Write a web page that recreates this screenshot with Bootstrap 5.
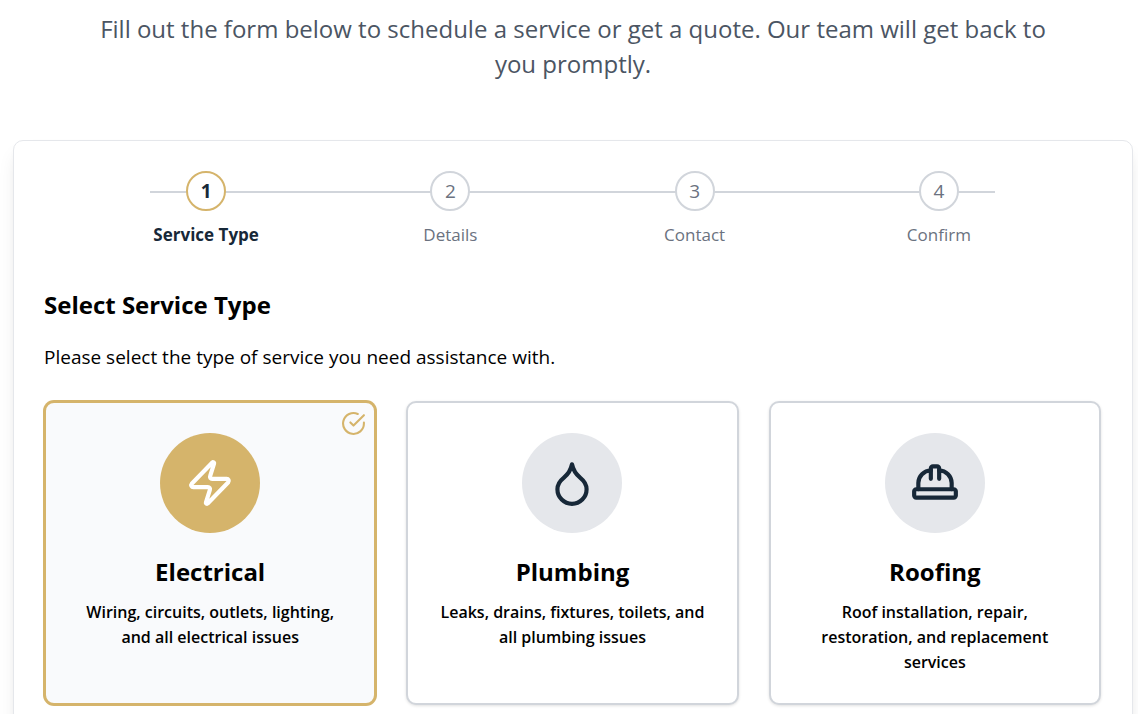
<!DOCTYPE html>
<html lang="en">
<head>
<meta charset="utf-8">
<meta name="viewport" content="width=device-width, initial-scale=1">
<title>Request a Service</title>
<link href="https://cdn.jsdelivr.net/npm/bootstrap@5.3.0/dist/css/bootstrap.min.css" rel="stylesheet">
<style>
  :root { --gold: #d5b46b; --navy: #172838; --line: #d1d5db; --muted: #6b7280; }
  body { font-family: "Open Sans", "Noto Sans", sans-serif; font-size: 19px; color: #000; background: #fff; }
  .page { padding: 11px 5px 60px 13px; }
  .intro { max-width: 960px; font-size: 24px; line-height: 35px; color: #4b5563; margin-bottom: 59px; }
  .panel { border: 1px solid #e5e7eb; border-radius: 10px; padding: 30px 31px 30px 30px; background: #fff;
    box-shadow: 0 12px 19px -4px rgba(0,0,0,.1), 0 5px 8px -5px rgba(0,0,0,.1); }
  .stepper { padding: 0 40px; margin-bottom: 40px; font-size: 17px; line-height: 24px; color: var(--muted); }
  .stepper::before { content: ""; position: absolute; top: 20px; left: 10%; right: 10%; height: 2px; background: var(--line); }
  .step { flex: 1 1 0; gap: 12px; }
  .step-dot { width: 40px; height: 40px; border: 2px solid var(--line); background: #fff; font-size: 19px; }
  .step.current { color: var(--navy); font-weight: 700; }
  .step.current .step-dot { border-color: var(--gold); }
  .section-title, .option-title { font-size: 24px; line-height: 35px; font-weight: 700; }
  .section-title { margin-bottom: 20px; }
  .lead-in { line-height: 30px; margin-bottom: 29px; }
  .options { --bs-gutter-x: 30px; --bs-gutter-y: 30px; }
  .option { border: 2px solid var(--line); border-radius: 10px; padding: 30px 30px 28px; color: #000; background: #fff;
    box-shadow: 0 1px 3px rgba(0,0,0,.12); }
  .option.selected { border-color: var(--gold); background: #f9fafc; box-shadow: 0 0 0 1px var(--gold); }
  .option-icon { width: 100px; height: 100px; background: #e5e7eb; color: var(--navy); margin-bottom: 21px; }
  .selected .option-icon { background: var(--gold); color: #fff; }
  .option-title { margin-bottom: 11px; }
  .option-text { font-size: 16px; line-height: 25px; font-weight: 600; }
  .tick { top: 8px; right: 8px; color: var(--gold); }
  svg { fill: none; stroke: currentColor; stroke-width: 2; stroke-linecap: round; stroke-linejoin: round; }
</style>
</head>
<body>
<main class="page">
  <p class="intro mx-auto text-center">Fill out the form below to schedule a service or get a quote. Our team will get back to you promptly.</p>

  <form class="panel">
    <ol class="stepper list-unstyled d-flex position-relative">
      <li class="step current d-flex flex-column align-items-center position-relative" aria-current="step">
        <span class="step-dot rounded-circle d-flex align-items-center justify-content-center">1</span><span>Service Type</span>
      </li>
      <li class="step d-flex flex-column align-items-center position-relative">
        <span class="step-dot rounded-circle d-flex align-items-center justify-content-center">2</span><span>Details</span>
      </li>
      <li class="step d-flex flex-column align-items-center position-relative">
        <span class="step-dot rounded-circle d-flex align-items-center justify-content-center">3</span><span>Contact</span>
      </li>
      <li class="step d-flex flex-column align-items-center position-relative">
        <span class="step-dot rounded-circle d-flex align-items-center justify-content-center">4</span><span>Confirm</span>
      </li>
    </ol>

    <h2 class="section-title">Select Service Type</h2>
    <p class="lead-in">Please select the type of service you need assistance with.</p>

    <div class="options row row-cols-1 row-cols-md-3">
      <div class="col d-flex">
        <button type="button" class="option selected w-100 position-relative d-flex flex-column align-items-center" aria-pressed="true">
          <svg class="tick position-absolute" width="25" height="25" viewBox="0 0 24 24" aria-hidden="true"><path d="M22 11.08V12a10 10 0 1 1-5.93-9.14"/><path d="m9 11 3 3L22 4"/></svg>
          <span class="option-icon rounded-circle d-flex align-items-center justify-content-center">
            <svg width="50" height="50" viewBox="0 0 24 24" aria-hidden="true"><path d="M4 14a1 1 0 0 1-.78-1.63l9.9-10.2a.5.5 0 0 1 .86.46l-1.92 6.02A1 1 0 0 0 13 10h7a1 1 0 0 1 .78 1.63l-9.9 10.2a.5.5 0 0 1-.86-.46l1.92-6.02A1 1 0 0 0 11 14z"/></svg>
          </span>
          <span class="option-title">Electrical</span>
          <span class="option-text">Wiring, circuits, outlets, lighting, and all electrical issues</span>
        </button>
      </div>
      <div class="col d-flex">
        <button type="button" class="option w-100 d-flex flex-column align-items-center" aria-pressed="false">
          <span class="option-icon rounded-circle d-flex align-items-center justify-content-center">
            <svg width="50" height="50" viewBox="0 0 24 24" aria-hidden="true"><path d="M12 22a7 7 0 0 0 7-7c0-2-1-3.9-3-5.5s-3.5-4-4-6.5c-.5 2.5-2 4.9-4 6.5C6 11.1 5 13 5 15a7 7 0 0 0 7 7z"/></svg>
          </span>
          <span class="option-title">Plumbing</span>
          <span class="option-text">Leaks, drains, fixtures, toilets, and all plumbing issues</span>
        </button>
      </div>
      <div class="col d-flex">
        <button type="button" class="option w-100 d-flex flex-column align-items-center" aria-pressed="false">
          <span class="option-icon rounded-circle d-flex align-items-center justify-content-center">
            <svg width="50" height="50" viewBox="0 0 24 24" aria-hidden="true"><path d="M2 18a1 1 0 0 0 1 1h18a1 1 0 0 0 1-1v-2a1 1 0 0 0-1-1H3a1 1 0 0 0-1 1v2z"/><path d="M10 10V5a1 1 0 0 1 1-1h2a1 1 0 0 1 1 1v5"/><path d="M4 15v-3a6 6 0 0 1 6-6"/><path d="M14 6a6 6 0 0 1 6 6v3"/></svg>
          </span>
          <span class="option-title">Roofing</span>
          <span class="option-text">Roof installation, repair, restoration, and replacement services</span>
        </button>
      </div>
    </div>
  </form>
</main>
<script src="https://cdn.jsdelivr.net/npm/bootstrap@5.3.0/dist/js/bootstrap.bundle.min.js"></script>
</body>
</html>
